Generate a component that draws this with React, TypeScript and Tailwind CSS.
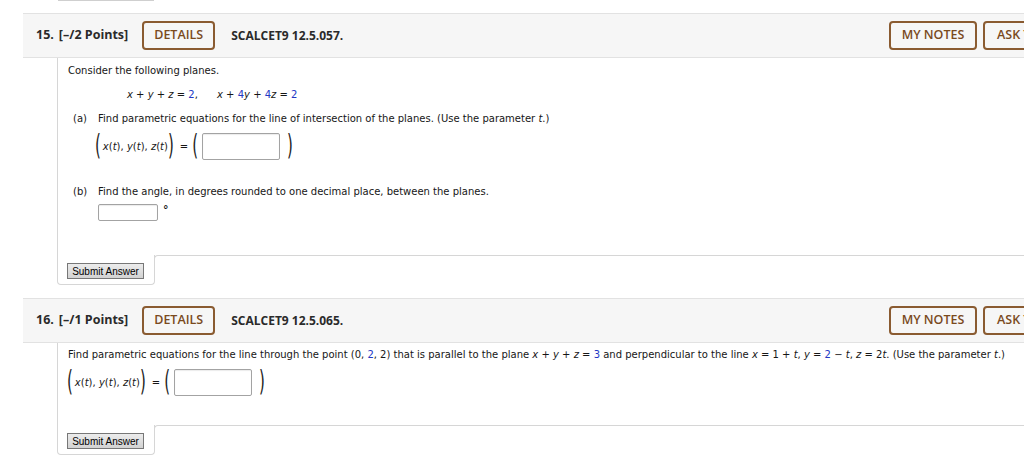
import React from "react";

const B = ({ children }: { children: React.ReactNode }) => (
  <span className="text-[#2237c4]">{children}</span>
);
const V = ({ children }: { children: React.ReactNode }) => <i>{children}</i>;

const BigParen = ({ c }: { c: string }) => (
  <span className="inline-block text-[15px] leading-none scale-y-[1.85] font-['DejaVu_Sans',sans-serif] text-[#222]">
    {c}
  </span>
);

const Header = ({ num, pts, code }: { num: string; pts: string; code: string }) => (
  <div className="ml-[23px] w-[1112px] h-[45px] bg-[#f6f6f6] border-y border-[#e2e2e2] flex items-center pl-[13px] pr-[12px] font-['Open_Sans',sans-serif] text-[#2a2a2a]">
    <span className="text-[12.5px] font-bold">{num}</span>
    <span className="text-[12.5px] font-bold ml-[5px]">{pts}</span>
    <div className="ml-[14px] h-[29px] w-[73px] border-2 border-[#8a5b31] rounded-[4px] flex items-center justify-center text-[12.5px] font-semibold text-[#7a4a1d]">
      DETAILS
    </div>
    <span className="ml-[16px] text-[12px] font-bold">{code}</span>
    <div className="flex-1" />
    <div className="h-[29px] w-[88px] border-2 border-[#8a5b31] rounded-[4px] flex items-center justify-center text-[12.5px] font-semibold text-[#7a4a1d]">
      MY NOTES
    </div>
    <div className="ml-[6px] h-[29px] w-[140px] border-2 border-[#8a5b31] rounded-[4px] flex items-center pl-[12px] text-[12.5px] font-semibold text-[#7a4a1d] whitespace-nowrap">
      ASK YOUR TEACHER
    </div>
  </div>
);

const SubmitTab = () => (
  <div className="ml-[57px] flex">
    <div className="w-[98px] border-l border-r border-b border-[#d6d6d6] rounded-b-[4px] pl-[9px] pt-[8px] pb-[5px]">
      <button className="w-[77px] h-[16px] border border-[#777] bg-gradient-to-b from-[#ececec] to-[#d2d2d2] text-[10px] leading-[13px] text-black font-['Liberation_Sans',Arial,sans-serif] flex items-center justify-center">
        Submit Answer
      </button>
    </div>
    <div className="flex-1 -ml-px h-[8px] border-t border-l border-[#d6d6d6] rounded-tl-[4px]" />
  </div>
);

const InputBox = ({ w, h }: { w: number; h: number }) => (
  <div
    className="border border-[#a3a3a3] rounded-[2px] bg-white shadow-[inset_0_1px_1px_rgba(0,0,0,0.08)]"
    style={{ width: w, height: h }}
  />
);

const ParamRow = () => (
  <div className="flex items-center">
    <BigParen c="(" />
    <span className="ml-[2px] text-[10px]">
      <V>x</V>(<V>t</V>), <V>y</V>(<V>t</V>), <V>z</V>(<V>t</V>)
    </span>
    <BigParen c=")" />
    <span className="ml-[6px] text-[10px]">=</span>
    <span className="ml-[4px]">
      <BigParen c="(" />
    </span>
    <div className="ml-[4px]">
      <InputBox w={78} h={27} />
    </div>
    <span className="ml-[7px]">
      <BigParen c=")" />
    </span>
  </div>
);

export default function App() {
  return (
    <div className="w-[1024px] h-[458px] overflow-hidden bg-white font-['DejaVu_Sans',Verdana,sans-serif] text-[#161616]">
      <div className="ml-[58px] w-[96px] h-[1px] bg-[#cfcfcf]" />
      <div className="mt-[12px]">
        <Header num="15." pts="[–/2 Points]" code="SCALCET9 12.5.057." />
        <div className="ml-[57px] border-l border-[#d6d6d6] pl-[10px] pt-[6px] pb-[34px] text-[10px] leading-[14px]">
          <div>Consider the following planes.</div>
          <div className="mt-[10px] ml-[59px] whitespace-pre">
            <V>x</V> + <V>y</V> + <V>z</V> = <B>2</B>,{"      "}<V>x</V> + <B>4</B><V>y</V> + <B>4</B><V>z</V> = <B>2</B>
          </div>
          <div className="mt-[10px] flex">
            <span className="w-[30px] pl-[5px]">(a)</span>
            <span>
              Find parametric equations for the line of intersection of the planes. (Use the parameter <V>t</V>.)
            </span>
          </div>
          <div className="mt-[7px] ml-[27px]">
            <ParamRow />
          </div>
          <div className="mt-[25px] flex">
            <span className="w-[30px] pl-[5px]">(b)</span>
            <span>Find the angle, in degrees rounded to one decimal place, between the planes.</span>
          </div>
          <div className="mt-[5px] ml-[30px] flex items-start">
            <InputBox w={60} h={17} />
            <span className="ml-[5px] -mt-[1px] text-[11px] font-bold leading-[14px]">°</span>
          </div>
        </div>
        <SubmitTab />
      </div>
      <div className="mt-[13px]">
        <Header num="16." pts="[–/1 Points]" code="SCALCET9 12.5.065." />
        <div className="ml-[57px] border-l border-[#d6d6d6] pl-[10px] pt-[5px] pb-[29px] text-[10px] leading-[14px]">
          <div className="whitespace-nowrap">
            Find parametric equations for the line through the point (0, <B>2</B>, 2) that is parallel to the plane{" "}
            <V>x</V> + <V>y</V> + <V>z</V> = <B>3</B> and perpendicular to the line <V>x</V> = 1 + <V>t</V>,{" "}
            <V>y</V> = <B>2</B> − <V>t</V>, <V>z</V> = 2<V>t</V>. (Use the parameter <V>t</V>.)
          </div>
          <div className="mt-[7px] -ml-[1px]">
            <ParamRow />
          </div>
        </div>
        <SubmitTab />
      </div>
    </div>
  );
}
